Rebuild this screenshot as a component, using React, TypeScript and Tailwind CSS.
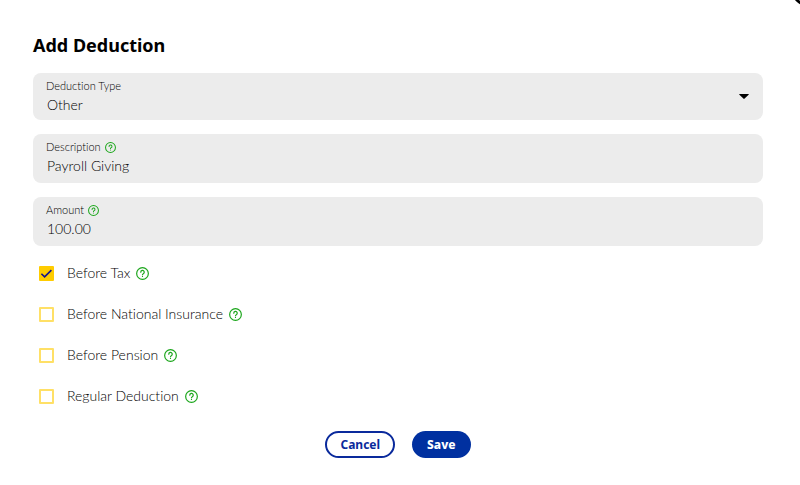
import { useState } from "react";

function HelpIcon({ className }: { className?: string }) {
  return (
    <svg
      viewBox="0 0 24 24"
      fill="none"
      stroke="currentColor"
      strokeWidth="2.2"
      strokeLinecap="round"
      strokeLinejoin="round"
      className={`shrink-0 text-[#1ba61b] ${className ?? ""}`}
      aria-hidden="true"
    >
      <circle cx="12" cy="12" r="10.8" />
      <path d="M8.8 9.6a3.2 3.2 0 1 1 4.8 2.7c-1 .6-1.6 1-1.6 1.9" />
      <path d="M12 17.4v.1" />
    </svg>
  );
}

interface TextFieldProps {
  id: string;
  label: string;
  value: string;
  onChange: (value: string) => void;
}

function TextField({ id, label, value, onChange }: TextFieldProps) {
  return (
    <div className="rounded-lg bg-[#ececec] px-[13px] pt-[5px] pb-[7px]">
      <label htmlFor={id} className="flex items-center gap-1 text-[11px] leading-4">
        {label}
        <HelpIcon className="size-[11px]" />
      </label>
      <input
        id={id}
        type="text"
        value={value}
        onChange={e => onChange(e.target.value)}
        className="mt-px block h-5 w-full bg-transparent pl-px text-sm leading-5 outline-none"
      />
    </div>
  );
}

interface CheckRowProps {
  id: string;
  label: string;
  checked: boolean;
  onChange: () => void;
}

function CheckRow({ id, label, checked, onChange }: CheckRowProps) {
  return (
    <div className="flex h-6 items-center">
      <span className="relative flex size-[15px]">
        <input
          id={id}
          type="checkbox"
          checked={checked}
          onChange={onChange}
          className="size-[15px] appearance-none rounded-[1px] border-2 border-[#ffe066] bg-white checked:border-[#ffcc00] checked:bg-[#ffcc00]"
        />
        {checked && (
          <svg
            viewBox="0 0 15 15"
            fill="none"
            stroke="#14148c"
            strokeWidth="1.6"
            className="pointer-events-none absolute inset-0 size-[15px]"
            aria-hidden="true"
          >
            <path d="M2.4 7.8l3.2 3.1 6.8-6.8" />
          </svg>
        )}
      </span>
      <label htmlFor={id} className="ml-[13px] text-sm leading-5">{label}</label>
      <HelpIcon className="ml-1.5 size-[13px]" />
    </div>
  );
}

const options = [
  { id: "tax", label: "Before Tax" },
  { id: "ni", label: "Before National Insurance" },
  { id: "pension", label: "Before Pension" },
  { id: "regular", label: "Regular Deduction" },
];

export default function App() {
  const [type, setType] = useState("Other");
  const [description, setDescription] = useState("Payroll Giving");
  const [amount, setAmount] = useState("100.00");
  const [selected, setSelected] = useState<string[]>(["tax"]);

  const toggle = (id: string) => {
    setSelected(prev => (prev.includes(id) ? prev.filter(s => s !== id) : [...prev, id]));
  };

  return (
    <div className="relative min-h-screen overflow-hidden bg-white pt-[31px] pr-[37px] pb-6 pl-[33px] font-[Lato,sans-serif] font-light text-black [font-variant-ligatures:none]">
      {/* Close button, mostly off the corner */}
      <button
        type="button"
        aria-label="Close"
        className="absolute -top-[24px] -right-[22px] size-[30px] rounded-full border-3 border-black bg-white"
      />

      <h1 className="font-['Noto_Sans',sans-serif] text-lg leading-7 font-bold text-black">
        Add Deduction
      </h1>

      <form className="mt-3.5" onSubmit={e => e.preventDefault()}>
        <div className="flex flex-col gap-3.5">
          <div className="relative rounded-lg bg-[#ececec] px-[13px] py-[5px]">
            <label htmlFor="type" className="block text-[11px] leading-4">Deduction Type</label>
            <select
              id="type"
              value={type}
              onChange={e => setType(e.target.value)}
              className="mt-px block h-5 w-full appearance-none bg-transparent pl-px text-sm leading-5 outline-none"
            >
              <option>Other</option>
            </select>
            <svg
              viewBox="0 0 10 5"
              className="pointer-events-none absolute top-0 right-3.5 bottom-0 my-auto h-[5px] w-[10px]"
              aria-hidden="true"
            >
              <path d="M0.6 0h8.8q.8 0 .2.7L5.6 4.6q-.6.6-1.2 0L.4.7Q-.2 0 .6 0z" fill="#000" />
            </svg>
          </div>
          <TextField id="description" label="Description" value={description} onChange={setDescription} />
          <TextField id="amount" label="Amount" value={amount} onChange={setAmount} />
        </div>

        <div className="mt-[15px] flex flex-col gap-[17px] pl-1.5">
          {options.map(option => (
            <CheckRow
              key={option.id}
              id={option.id}
              label={option.label}
              checked={selected.includes(option.id)}
              onChange={() => toggle(option.id)}
            />
          ))}
        </div>

        <div className="mt-[23px] flex justify-center gap-[17px] font-['Noto_Sans',sans-serif] text-xs font-bold">
          <button
            type="button"
            className="h-[27px] rounded-full border-2 border-[#0a2a9c] px-[13px] text-[#0a2a9c]"
          >
            Cancel
          </button>
          <button type="submit" className="h-[27px] rounded-full bg-[#0030a0] px-[15px] font-extrabold text-white">
            Save
          </button>
        </div>
      </form>
    </div>
  );
}
